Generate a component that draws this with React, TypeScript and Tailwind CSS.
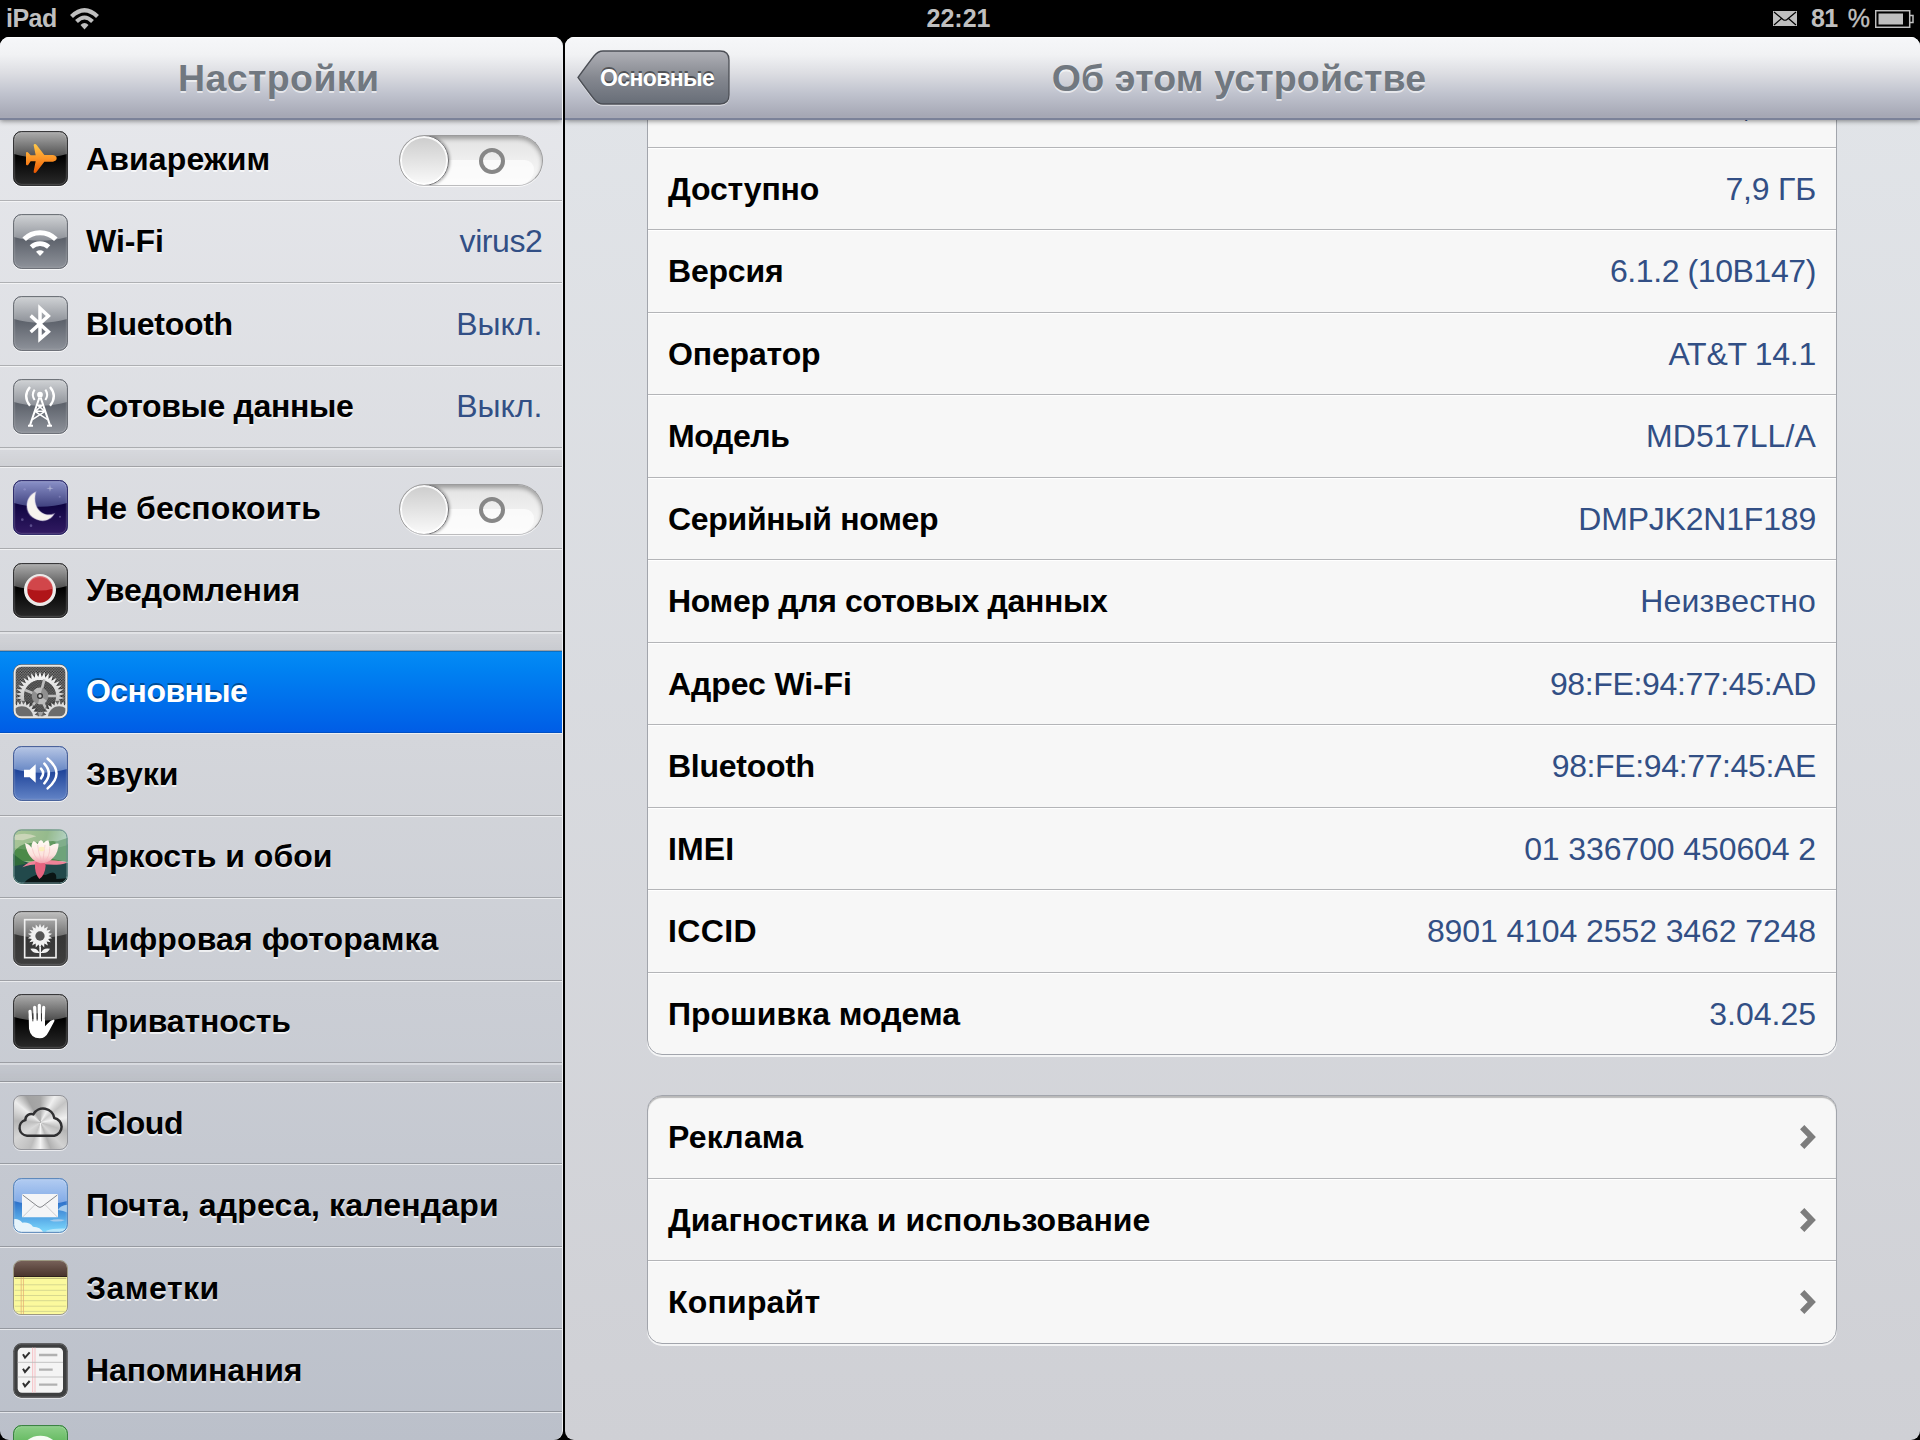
import React from 'react';
import type { ReactNode } from 'react';

type IconProps = { children?: ReactNode; id: string; top: string; mid: string; low: string; bottom: string; edge?: string };

// Glossy app tile, drawn on a 165 unit grid
const Tile = ({ children, id, top, mid, low, bottom, edge = '#2a2a2c' }: IconProps) => (
  <svg viewBox="0 0 165 165" className="w-[55px] h-[55px] shrink-0 drop-shadow-[0_1px_0_rgba(255,255,255,0.7)]">
    <defs>
      <linearGradient id={`${id}-base`} x1="0" y1="0" x2="0" y2="1">
        <stop offset="0.45" stopColor={low} />
        <stop offset="1" stopColor={bottom} />
      </linearGradient>
      <linearGradient id={`${id}-gloss`} x1="0" y1="0" x2="0" y2="1">
        <stop offset="0" stopColor={top} />
        <stop offset="1" stopColor={mid} />
      </linearGradient>
      <clipPath id={`${id}-clip`}>
        <rect x="1" y="1" width="163" height="163" rx="24" />
      </clipPath>
    </defs>
    <g clipPath={`url(#${id}-clip)`}>
      <rect width="165" height="165" fill={`url(#${id}-base)`} />
      <path d="M0 0H165V68Q82 92 0 68Z" fill={`url(#${id}-gloss)`} />
      {children}
    </g>
    <rect x="5" y="5" width="155" height="155" rx="20" fill="none" stroke="#fff" strokeOpacity="0.2" strokeWidth="3" />
    <rect x="2" y="2" width="161" height="161" rx="23" fill="none" stroke={edge} strokeWidth="3" />
  </svg>
);

const gray = { top: '#d2d4d7', mid: '#8d9198', low: '#5d626b', bottom: '#8f939b', edge: '#62666e' };
const black = { top: '#b0b0b0', mid: '#4c4c4c', low: '#000000', bottom: '#2b2b2b', edge: '#2a2a2c' };

// Teeth around a circle, as a closed polygon
const cog = (cx: number, cy: number, outer: number, inner: number, teeth: number) =>
  Array.from({ length: teeth * 2 }, (_, i) => {
    const r = i % 2 ? inner : outer;
    const a = (i * Math.PI) / teeth - Math.PI / 2;
    return `${(cx + r * Math.cos(a)).toFixed(1)},${(cy + r * Math.sin(a)).toFixed(1)}`;
  }).join(' ');

const AirplaneIcon = () => (
  <Tile id="air" {...black}>
    <defs>
      <linearGradient id="air-fill" x1="0" y1="0" x2="0" y2="1">
        <stop offset="0" stopColor="#ffc94a" />
        <stop offset="0.5" stopColor="#fb9427" />
        <stop offset="1" stopColor="#e85500" />
      </linearGradient>
    </defs>
    <path
      d="M39 65Q39 63 42 63Q45 63 46 65L53 73L68 73L62 43Q62 39 66 39Q69 39 71 42L94 72L120 72Q131 74 131 82Q131 90 120 92L94 92L71 122Q69 126 65 126Q61 126 62 121L68 91L53 91L46 101Q45 103 42 103Q39 103 39 100Z"
      fill="url(#air-fill)"
    />
  </Tile>
);

const WifiIcon = () => (
  <Tile id="wifi" {...gray}>
    <g fill="none" stroke="#fff">
      <path d="M33.500 76A67 67 0 0 1 128.500 76" strokeWidth="15" />
      <path d="M55 99A38 38 0 0 1 107 99" strokeWidth="14" />
    </g>
    <path d="M69 113Q81 105 93 113L81 126Z" fill="#fff" />
  </Tile>
);

const BluetoothIcon = () => (
  <Tile id="bt" {...gray}>
    <path d="M53 59L106 107L81 129V37L106 60L53 108" fill="none" stroke="#fff" strokeWidth="10.500" />
  </Tile>
);

const TowerIcon = () => (
  <Tile id="tower" {...gray}>
    <g fill="none" stroke="#fff" strokeWidth="6">
      <path d="M79 56L51 139M83 56L111 139M45 140H60M102 140H117" />
      <path d="M72 77L96 97M90 77L66 97L104 122M96 97L58 122M71 79H91M66 97H96" strokeWidth="4.500" />
      <path d="M65 32Q54 47 65 63M97 32Q108 47 97 63" />
      <path d="M51 24Q28 51 51 80M111 24Q134 51 111 80" strokeWidth="7" />
    </g>
    <circle cx="81" cy="47" r="8.500" fill="#fff" />
  </Tile>
);

const MoonIcon = () => (
  <Tile id="moon" top="#8d94cb" mid="#40427f" low="#0f0542" bottom="#331b63" edge="#292765">
    <g fill="#a9a6dd" fillOpacity="0.4">
      <circle cx="35" cy="28" r="3.500" />
      <circle cx="140" cy="50" r="3" />
      <circle cx="28" cy="119" r="4" />
      <circle cx="141" cy="110" r="3" />
      <circle cx="54" cy="137" r="4" />
      <path d="M111 14L113 23L122 25L113 27L111 36L109 27L100 25L109 23Z" fill="#fff" />
    </g>
    <path d="M68 36C36 50 34 94 59 112C84 130 112 122 123 102C92 113 56 88 68 36Z" fill="#f6f3ee" stroke="#cfc9e6" strokeOpacity="0.4" strokeWidth="4" />
  </Tile>
);

const NotificationsIcon = () => (
  <Tile id="notif" {...black}>
    <circle cx="81" cy="81" r="43" fill="#b01518" stroke="#eceae9" strokeWidth="10" />
    <path d="M43 77A38 38 0 0 1 119 77Q81 88 43 77Z" fill="#d95357" fillOpacity="0.8" />
  </Tile>
);

const GearIcon = () => (
  <svg viewBox="0 0 165 165" className="w-[55px] h-[55px] shrink-0">
    <defs>
      <pattern id="mesh" width="8" height="8" patternUnits="userSpaceOnUse">
        <rect width="8" height="8" fill="#858585" />
        <circle cx="2" cy="2" r="2.300" fill="#2c2c2c" />
        <circle cx="6" cy="6" r="2.300" fill="#2c2c2c" />
      </pattern>
      <linearGradient id="steel" x1="0" y1="0" x2="0" y2="1">
        <stop offset="0" stopColor="#ffffff" />
        <stop offset="0.5" stopColor="#cfcfcf" />
        <stop offset="1" stopColor="#8e8e8e" />
      </linearGradient>
      <clipPath id="gear-clip">
        <rect x="6" y="6" width="153" height="153" rx="19" />
      </clipPath>
    </defs>
    <rect x="1" y="1" width="163" height="163" rx="24" fill="#4e4e50" />
    <g clipPath="url(#gear-clip)">
      <rect width="165" height="165" fill="url(#mesh)" />
      <circle cx="81" cy="96" r="66" fill="#2e2e2e" fillOpacity="0.6" />
      <polygon points={cog(81, 96, 73, 57, 34)} fill="url(#steel)" />
      <circle cx="81" cy="96" r="48" fill="#484848" />
      <circle cx="81" cy="96" r="48" fill="url(#mesh)" fillOpacity="0.55" />
      <path d="M81 96L94 46M81 96L131 96M81 96L103 143M81 96L50 136M81 96L36 78" stroke="#bdbdbd" strokeWidth="8" />
      <circle cx="81" cy="96" r="25" fill="#8f8f8f" />
      <path d="M81 96L62 80A25 25 0 0 1 88 72ZM81 96L102 110A25 25 0 0 1 75 120Z" fill="#bcbcbc" />
      <circle cx="81" cy="96" r="9" fill="#333" />
      <circle cx="81" cy="96" r="5" fill="#c9c9c9" />
      <circle cx="26" cy="162" r="52" fill="#2e2e2e" fillOpacity="0.6" />
      <polygon points={cog(26, 162, 52, 40, 26)} fill="#dedede" />
      <circle cx="26" cy="162" r="35" fill="#6c6c6c" />
      <circle cx="139" cy="162" r="52" fill="#2e2e2e" fillOpacity="0.6" />
      <polygon points={cog(139, 162, 52, 40, 26)} fill="#dedede" />
      <circle cx="139" cy="162" r="35" fill="#6c6c6c" />
    </g>
    <rect x="5" y="5" width="155" height="155" rx="20" fill="none" stroke="#e9e6e1" strokeWidth="6" />
  </svg>
);

const SoundIcon = () => (
  <Tile id="sound" top="#b9c8e6" mid="#6384c3" low="#20459a" bottom="#6586c8" edge="#3d5691">
    <path d="M33 71H50L68 55V110L50 94H33Z" fill="#fff" />
    <g fill="none" stroke="#fff" strokeWidth="7.500" strokeLinecap="round">
      <path d="M84 68Q97 82 84 97" />
      <path d="M94 53Q121 82 94 112" />
      <path d="M104 38Q157 82 104 127" />
    </g>
  </Tile>
);

const LotusIcon = () => (
  <svg viewBox="0 0 165 165" className="w-[55px] h-[55px] shrink-0 drop-shadow-[0_1px_0_rgba(255,255,255,0.7)]">
    <defs>
      <linearGradient id="pond" x1="0" y1="0" x2="1" y2="0.3">
        <stop offset="0" stopColor="#9fbf8a" />
        <stop offset="0.6" stopColor="#86b07c" />
        <stop offset="1" stopColor="#aed0c4" />
      </linearGradient>
      <linearGradient id="petal" x1="0" y1="0" x2="0" y2="1">
        <stop offset="0" stopColor="#fffaf2" />
        <stop offset="0.65" stopColor="#fce3de" />
        <stop offset="1" stopColor="#f09dac" />
      </linearGradient>
      <clipPath id="lotus-clip">
        <rect x="1" y="1" width="163" height="163" rx="24" />
      </clipPath>
    </defs>
    <g clipPath="url(#lotus-clip)">
      <rect width="165" height="165" fill="url(#pond)" />
      <path d="M0 20Q40 8 70 22L30 34L0 32Z" fill="#c3cfae" />
      <path d="M0 76Q14 44 52 42L120 36L165 44V96H0Z" fill="#4b8a48" />
      <path d="M128 38L165 26V100L120 90Z" fill="#6ea37a" />
      <path d="M0 92Q40 96 60 106L165 102V165H0Z" fill="#22494b" />
      <path d="M0 74L40 104L0 112Z" fill="#2f6b3a" />
      <path d="M30 165Q60 130 98 138Q132 118 130 150L165 148V165Z" fill="#0a1514" />
      <path d="M28 115Q46 96 78 94L80 106Q50 106 28 115ZM88 92Q128 92 163 100Q150 109 122 107L90 106Z" fill="#ee8398" />
      <path d="M66 104Q68 96 82 94Q96 98 98 110Q96 138 79 150Q64 132 66 104Z" fill="#e5637f" />
      <path d="M82 103Q44 92 36 42Q50 46 56 56Q54 44 62 36Q70 40 74 46Q76 36 84 33Q90 36 92 42Q98 34 106 34Q110 42 110 52Q122 42 137 44Q134 90 94 102Z" fill="url(#petal)" />
      <path d="M58 58Q62 84 82 98M96 48Q92 74 90 98M74 48Q76 70 84 92M110 54Q112 82 94 98" fill="none" stroke="#f2b9bc" strokeWidth="1.800" />
      <ellipse cx="86" cy="60" rx="9" ry="7" fill="#fbedb8" />
      <path d="M0 0H165V48Q82 74 0 56Z" fill="#fff" fillOpacity="0.13" />
    </g>
    <rect x="3" y="3" width="159" height="159" rx="22" fill="none" stroke="#6d8f92" strokeWidth="3" />
  </svg>
);

const FrameIcon = () => (
  <Tile id="frame" top="#c2c2c2" mid="#6c6c6c" low="#363636" bottom="#3e3e3e" edge="#454547">
    <rect x="35" y="26" width="94" height="114" fill="none" stroke="#eee" strokeWidth="5" />
    <polygon points={cog(81, 75, 37, 26, 18)} fill="#f1f1f1" />
    <circle cx="81" cy="75" r="14" fill="#555" />
    <path d="M79 108H84V140H79ZM79 125Q60 129 52 113Q72 109 79 125ZM84 125Q103 129 111 113Q91 109 84 125Z" fill="#f1f1f1" />
  </Tile>
);

const HandIcon = () => (
  <Tile id="hand" {...black}>
    <g stroke="#fff" strokeLinecap="round" strokeWidth="9.500">
      <path d="M51 52L54 92M65 40L67 90M79 34V90M92 40L90 90" />
    </g>
    <path d="M47 62L48 104Q53 133 80 133Q98 132 107 113L124 82Q126 76 121 77Q113 78 105 88L96 97V76H49Z" fill="#fff" />
    <path d="M59.500 58V82M72.500 58V80M85.500 58V82" stroke="#222" strokeWidth="2.500" />
  </Tile>
);

const CloudIcon = () => (
  <div className="relative w-[55px] h-[55px] shrink-0 rounded-[8px] border border-[#94959a] overflow-hidden shadow-[0_1px_0_rgba(255,255,255,0.6)] bg-[conic-gradient(#a8a8a8,#efefef_8%,#c4c4c4_14%,#f0f0f0_22%,#b5b5b5_30%,#d2d2d2_38%,#b0b0b0_44%,#f4f4f4_50%,#bdbdbd_56%,#d5d5d5_66%,#b5b5b5_76%,#ececec_86%,#a2a2a2_92%,#a8a8a8)]">
    <svg viewBox="3 3 159 159" className="w-full h-full">
      <path
        d="M42 122H124A27 27 0 0 0 124 69A34 34 0 0 0 61 58A18 18 0 0 0 37 75A24 24 0 0 0 42 122Z"
        fill="#fff"
        fillOpacity="0.12"
        stroke="#303032"
        strokeWidth="7.500"
      />
    </svg>
  </div>
);

const MailIcon = () => (
  <Tile id="mail" top="#b4cdf2" mid="#7ea8e6" low="#2f74cc" bottom="#7fdcff" edge="#5580b4">
    <path d="M0 124Q16 120 28 134Q50 132 60 146Q82 146 92 165H0Z" fill="#e7f4fb" />
    <path d="M135 96Q140 82 165 80V104Q150 98 135 96ZM110 128Q130 121 156 126Q140 134 110 128Z" fill="#a5cbed" />
    <path d="M100 158Q120 150 165 152V165H100Z" fill="#b5e6fa" />
    <rect x="27" y="48" width="108" height="70" rx="2" fill="#f4f5f7" />
    <path d="M29 117L66 80M133 117L96 80" stroke="#b5b7bb" strokeWidth="2" />
    <path d="M29 51L75 86Q81 90 87 86L133 51" fill="none" stroke="#85878b" strokeWidth="3" />
  </Tile>
);

const NotesIcon = () => (
  <div className="flex flex-col w-[55px] h-[55px] shrink-0 rounded-[8px] border border-[#9d9981] overflow-hidden shadow-[0_1px_0_rgba(255,255,255,0.6)]">
    <div className="h-[16px] bg-linear-to-b from-[#766058] to-[#4a352d] border-b border-[#2e211c]" />
    <svg viewBox="0 0 159 114" className="w-full flex-1 bg-[#fbf99d]">
      <path d="M0 4H159" stroke="#b3ae72" strokeWidth="3" />
      <path d="M0 24H159M0 41H159M0 57H159M0 73H159M0 90H159M0 106H159" stroke="#cdd08c" strokeWidth="2.500" />
      <path d="M20 0V114M27 0V114" stroke="#e3a36c" strokeWidth="2" />
    </svg>
  </div>
);

const RemindersIcon = () => (
  <svg viewBox="0 0 165 165" className="w-[55px] h-[55px] shrink-0 drop-shadow-[0_1px_0_rgba(255,255,255,0.6)]">
    <rect x="1" y="1" width="163" height="163" rx="24" fill="#3e3f40" />
    <rect x="3" y="3" width="159" height="159" rx="22" fill="none" stroke="#606162" strokeWidth="3" />
    <rect x="14" y="14" width="136" height="135" rx="13" fill="#f4f4f4" />
    <path d="M59 14V149M66 14V149" stroke="#f6bfc4" strokeWidth="3" />
    <path d="M14 58H150M14 102H150" stroke="#b9b9b9" strokeWidth="2.500" />
    <path d="M78 36H133M78 80H119M78 125H133" stroke="#b1b1b1" strokeWidth="7" />
    <path d="M30 34L36 44L50 28M30 77L36 87L50 71M30 120L36 130L50 114" fill="none" stroke="#303030" strokeWidth="6" />
  </svg>
);

const MessagesIcon = () => (
  <Tile id="msg" top="#8ed08a" mid="#4fae4b" low="#1f8f1d" bottom="#5ccc4c" edge="#30783a">
    <ellipse cx="82" cy="76" rx="54" ry="44" fill="#f5fbf4" />
  </Tile>
);

const Toggle = () => (
  <div className="relative mt-[3px] w-[144px] h-[51px] shrink-0 rounded-full border border-[#9b9b9c] border-b-[#bcbcbe] overflow-hidden bg-linear-to-b from-[#e2e2e2] via-[#efefef] to-[#f9f9f9] shadow-[inset_0_3px_4px_rgba(0,0,0,0.3),0_1px_0_rgba(255,255,255,0.8)]">
    <div className="absolute left-[30px] right-[8px] top-[24px] bottom-0 rounded-tr-[14px] rounded-br-[24px] bg-[#fcfcfc]/80" />
    <div className="absolute left-[79px] top-[12px] w-[26px] h-[26px] rounded-full border-4 border-[#878787]" />
    <div className="absolute -left-px -top-px w-[50px] h-[51px] rounded-full border border-[#747477] bg-linear-to-b from-[#cccccc] to-[#fafafa] shadow-[inset_0_0_0_2px_rgba(255,255,255,0.85),1px_0_3px_rgba(0,0,0,0.35)]" />
  </div>
);

type Row = { label: string; tracking?: string; icon: ReactNode; value?: string; valueTracking?: string; toggle?: boolean; active?: boolean };

const groups: Row[][] = [
  [
    { label: 'Авиарежим', tracking: 'tracking-[0.13px]', icon: <AirplaneIcon />, toggle: true },
    { label: 'Wi-Fi', icon: <WifiIcon />, value: 'virus2', valueTracking: 'tracking-[-0.4px]' },
    { label: 'Bluetooth', tracking: 'tracking-[-0.27px]', icon: <BluetoothIcon />, value: 'Выкл.' },
    { label: 'Сотовые данные', tracking: 'tracking-[-0.35px]', icon: <TowerIcon />, value: 'Выкл.' },
  ],
  [
    { label: 'Не беспокоить', tracking: 'tracking-[0.1px]', icon: <MoonIcon />, toggle: true },
    { label: 'Уведомления', icon: <NotificationsIcon /> },
  ],
  [
    { label: 'Основные', tracking: 'tracking-[-0.54px]', icon: <GearIcon />, active: true },
    { label: 'Звуки', icon: <SoundIcon /> },
    { label: 'Яркость и обои', icon: <LotusIcon /> },
    { label: 'Цифровая фоторамка', tracking: 'tracking-[0.1px]', icon: <FrameIcon /> },
    { label: 'Приватность', tracking: 'tracking-[-0.15px]', icon: <HandIcon /> },
  ],
  [
    { label: 'iCloud', tracking: 'tracking-[-0.4px]', icon: <CloudIcon /> },
    { label: 'Почта, адреса, календари', tracking: 'tracking-[0.18px]', icon: <MailIcon /> },
    { label: 'Заметки', tracking: 'tracking-[0.5px]', icon: <NotesIcon /> },
    { label: 'Напоминания', tracking: 'tracking-[-0.1px]', icon: <RemindersIcon /> },
    { label: '', icon: <MessagesIcon /> },
  ],
];

type Info = { label: string; value: string; tracking?: string; valueTracking?: string };

const info: Info[] = [
  { label: 'Доступно', tracking: 'tracking-[-0.2px]', value: '7,9 ГБ', valueTracking: 'tracking-[-0.2px]' },
  { label: 'Версия', tracking: 'tracking-[-0.2px]', value: '6.1.2 (10B147)', valueTracking: 'tracking-[-0.4px]' },
  { label: 'Оператор', tracking: 'tracking-[-0.15px]', value: 'AT&T 14.1', valueTracking: 'tracking-[-0.27px]' },
  { label: 'Модель', tracking: 'tracking-[-0.4px]', value: 'MD517LL/A', valueTracking: 'tracking-[0.12px]' },
  { label: 'Серийный номер', tracking: 'tracking-[-0.3px]', value: 'DMPJK2N1F189', valueTracking: 'tracking-[-0.2px]' },
  { label: 'Номер для сотовых данных', tracking: 'tracking-[-0.33px]', value: 'Неизвестно', valueTracking: 'tracking-[0.18px]' },
  { label: 'Адрес Wi-Fi', tracking: 'tracking-[-0.1px]', value: '98:FE:94:77:45:AD', valueTracking: 'tracking-[-0.36px]' },
  { label: 'Bluetooth', tracking: 'tracking-[-0.27px]', value: '98:FE:94:77:45:AE', valueTracking: 'tracking-[-0.36px]' },
  { label: 'IMEI', tracking: 'tracking-[0.15px]', value: '01 336700 450604 2', valueTracking: 'tracking-[-0.1px]' },
  { label: 'ICCID', tracking: 'tracking-[0.35px]', value: '8901 4104 2552 3462 7248', valueTracking: 'tracking-[-0.1px]' },
  { label: 'Прошивка модема', value: '3.04.25' },
];

const links = [
  { label: 'Реклама', tracking: 'tracking-[0.2px]' },
  { label: 'Диагностика и использование', tracking: 'tracking-[0.07px]' },
  { label: 'Копирайт', tracking: 'tracking-[0.2px]' },
];

const SidebarRow = ({ row }: { row: Row }) => (
  <div
    className={`flex items-center h-[82.5px] pl-[13px] pr-[19px] border-b ${
      row.active
        ? 'bg-linear-to-b from-[#058cf5] to-[#015de6] border-[#0150c4] shadow-[inset_0_1px_0_#0a6fc4]'
        : 'border-[#000]/22 shadow-[inset_0_1px_0_rgba(255,255,255,0.6)]'
    }`}
  >
    {row.icon}
    <span
      className={`ml-[18px] flex-1 whitespace-nowrap font-bold ${row.tracking ?? ''} ${
        row.active ? 'text-white [text-shadow:0_-2px_0_rgba(0,0,0,0.4)]' : 'text-black [text-shadow:0_2px_0_rgba(255,255,255,0.7)]'
      }`}
    >
      {row.label}
    </span>
    {row.value && <span className={`text-[#324f85] ${row.valueTracking ?? ''}`}>{row.value}</span>}
    {row.toggle && <Toggle />}
  </div>
);

const StatusBar = () => (
  <div className="grid grid-cols-3 items-center h-[37px] px-[6px] text-[25px] font-bold text-[#bfbfbf]">
    <div className="flex items-center gap-[13px]">
      <span className="tracking-[-0.5px]">iPad</span>
      <svg viewBox="0 0 29 22" className="w-[29px] h-[22px]" fill="none" stroke="#bfbfbf">
        <path d="M1.500 8.500Q14.500 -4 27.500 8.500" strokeWidth="4.200" />
        <path d="M6.500 13.500Q14.500 5.500 22.500 13.500" strokeWidth="4" />
        <path d="M10.500 17Q14.500 13 18.500 17L14.500 21.500Z" fill="#bfbfbf" stroke="none" />
      </svg>
    </div>
    <span className="pr-[3px] text-center">22:21</span>
    <div className="flex items-center justify-end">
      <svg viewBox="0 0 24 15" className="w-[24px] h-[15px]">
        <rect width="24" height="15" fill="#bfbfbf" />
        <path d="M1 1L10 8.500Q12 10 14 8.500L23 1M1 14L8.500 7.500M23 14L15.500 7.500" fill="none" stroke="#000" strokeWidth="1.200" />
      </svg>
      <span className="ml-[14px] tracking-[-0.5px]">81</span>
      <span className="ml-[10px] font-normal [-webkit-text-stroke:0.400px_#bfbfbf]">%</span>
      <svg viewBox="0 0 39 18" className="ml-[5px] w-[39px] h-[18px]">
        <rect x="0.700" y="0.700" width="34" height="16.600" fill="none" stroke="#bfbfbf" strokeWidth="1.500" />
        <rect x="3.500" y="3.500" width="24.500" height="11" fill="#bfbfbf" />
        <path d="M35 5.500H38V12.500H35" fill="none" stroke="#bfbfbf" strokeWidth="1.500" />
      </svg>
    </div>
  </div>
);

const barStyle =
  'relative z-10 flex items-center h-[83px] shrink-0 border-b-2 border-[#7b8299] bg-[linear-gradient(#f6f7f9,#f1f2f4_22%,#dcdde2_45%,#c0c3ce_70%,#a6a8b5_97%)] shadow-[inset_0_1px_0_#fff,0_1px_5px_rgba(0,0,0,0.45)]';

const App = () => {
  return (
    <div className="flex flex-col w-[1920px] h-[1440px] overflow-hidden bg-black font-['Liberation_Sans',Arial,sans-serif] text-[32px] leading-none">
      <StatusBar />
      <div className="flex flex-1 min-h-0 gap-[2px]">
        {/* Sidebar */}
        <div className="flex flex-col w-[562.500px] rounded-[9px] overflow-hidden border-r border-[#eef0f3] bg-linear-to-b from-[#e8e9ed] via-[#d4d6db] to-[#bbc0ca]">
          <div className={`${barStyle} justify-center`}>
            <h1 className="pt-[2px] pr-[4px] text-[37.500px] tracking-[0.4px] font-bold text-[#717880] [text-shadow:0_2px_0_rgba(255,255,255,0.6)]">Настройки</h1>
          </div>
          <div className="-mt-[2px] flex flex-col">
            {groups.map((group, i) => (
              <div key={i}>
                {i > 0 && (
                  <div className="h-[18.750px] border-b border-[#000]/25 bg-linear-to-b from-[#000]/2 to-[#000]/6 shadow-[inset_0_2px_0_rgba(255,255,255,0.35)]" />
                )}
                {group.map((row) => (
                  <SidebarRow key={row.label} row={row} />
                ))}
              </div>
            ))}
          </div>
        </div>

        {/* Detail pane */}
        <div className="flex flex-col flex-1 rounded-[9px] overflow-hidden bg-linear-to-b from-[#e2e5e9] to-[#cfd0d5]">
          <div className={barStyle}>
            <button className="relative ml-[12.500px] w-[153px] h-[55px] shrink-0 pt-[1px] pl-[23px] text-left text-[23px] tracking-[-0.600px] font-bold text-white [text-shadow:0_-2px_0_rgba(0,0,0,0.45)]">
              <svg viewBox="0 0 153 55" className="absolute inset-0 w-full h-full drop-shadow-[0_1px_0_rgba(255,255,255,0.6)]">
                <defs>
                  <linearGradient id="back" x1="0" y1="0" x2="0" y2="1">
                    <stop offset="0" stopColor="#b0b1b7" />
                    <stop offset="0.5" stopColor="#858890" />
                    <stop offset="1" stopColor="#676d77" />
                  </linearGradient>
                </defs>
                <path
                  d="M1 27.500Q10 15 17 6Q21 1 26 1H143Q152 1 152 10V45Q152 54 143 54H26Q21 54 17 49Q10 40 1 27.500Z"
                  fill="url(#back)"
                  stroke="#4b4e55"
                  strokeWidth="1.300"
                />
              </svg>
              <span className="relative">Основные</span>
            </button>
            <h2 className="flex-1 pt-[2px] pr-[172px] text-center text-[37.500px] tracking-[0.14px] font-bold text-[#717880] [text-shadow:0_2px_0_rgba(255,255,255,0.6)]">
              Об этом устройстве
            </h2>
          </div>

          <div className="flex flex-col pl-[82.500px] pr-[83px] gap-[40px]">
            <div className="-mt-[55px] rounded-[15px] border border-[#a2a5ac] bg-[#f7f7f7] overflow-hidden shadow-[0_2px_0_rgba(255,255,255,0.75)]">
              <div className="flex items-center justify-end h-[81.500px] pr-[20px] text-[#324f85] border-b border-[#b4b5b8]">13,6 ГБ</div>
              {info.map((item) => (
                <div key={item.label} className="flex items-center justify-between h-[82.5px] last:h-[81.500px] pt-[1px] pl-[20px] pr-[20px] border-b border-[#b4b5b8] last:border-b-0 shadow-[inset_0_1px_0_#fff]">
                  <span className={`font-bold text-black whitespace-nowrap ${item.tracking ?? ''}`}>{item.label}</span>
                  <span className={`text-[#324f85] whitespace-nowrap ${item.valueTracking ?? ''}`}>{item.value}</span>
                </div>
              ))}
            </div>

            <div className="rounded-[15px] border border-[#a2a5ac] bg-[#f7f7f7] overflow-hidden shadow-[0_2px_0_rgba(255,255,255,0.75)]">
              {links.map((item) => (
                <div
                  key={item.label}
                  className="flex items-center justify-between h-[82.5px] last:h-[81.500px] pt-[1px] pl-[20px] pr-[20px] border-b border-[#b4b5b8] last:border-b-0 shadow-[inset_0_1px_0_#fff] first:rounded-t-[14px] first:shadow-[inset_0_2px_1px_rgba(0,0,0,0.25)]"
                >
                  <span className={`font-bold text-black whitespace-nowrap ${item.tracking}`}>{item.label}</span>
                  <svg viewBox="0 0 16 24" className="w-[16px] h-[24px]">
                    <path d="M2.200 2.200L11.700 12L2.200 21.800" fill="none" stroke="#7d7d7d" strokeWidth="6" />
                  </svg>
                </div>
              ))}
            </div>
          </div>
        </div>
      </div>
    </div>
  );
};

export default App;
